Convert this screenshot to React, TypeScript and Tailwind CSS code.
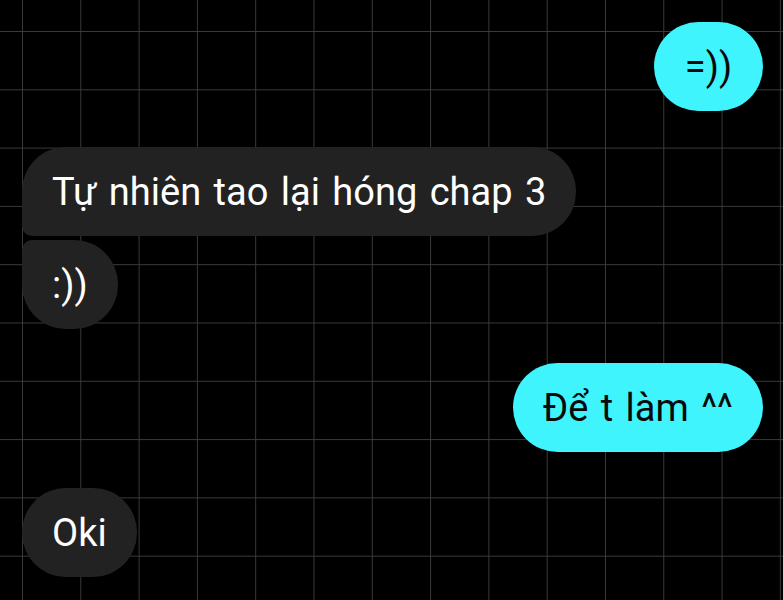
import React from 'react';

type Msg = { id: number; text: string; mine: boolean; corners: string; gap: string; w?: string };

const MESSAGES: Msg[] = [
  { id: 1, text: '=))', mine: true, corners: 'rounded-[45px]', gap: 'mt-0', w: 'w-[109px] justify-center' },
  { id: 2, text: 'Tự nhiên tao lại hóng chap 3', mine: false, corners: 'rounded-[44px] rounded-bl-[10px]', gap: 'mt-[36px]' },
  { id: 3, text: ':))', mine: false, corners: 'rounded-[44px] rounded-tl-[10px]', gap: 'mt-[4px]' },
  { id: 4, text: 'Để t làm ^^', mine: true, corners: 'rounded-[45px]', gap: 'mt-[34px]' },
  { id: 5, text: 'Oki', mine: false, corners: 'rounded-[44px]', gap: 'mt-[36px]' },
];

export default function App() {
  return (
    <div
      className="w-[783px] h-[600px] overflow-hidden bg-black bg-[image:linear-gradient(to_right,#3a3a3a_1px,transparent_1px),linear-gradient(to_bottom,#3a3a3a_1px,transparent_1px)] bg-[length:58.3px_58.3px] bg-[position:22px_31px] font-['Roboto','Noto_Sans',sans-serif]"
    >
      <div className="flex flex-col pt-[22px] pl-[22px] pr-[20px]">
        {MESSAGES.map(m => (
          <div key={m.id} className={`flex ${m.mine ? 'justify-end' : 'justify-start'} ${m.gap}`}>
            <div
              className={`h-[89px] flex items-center text-[38px] leading-none [word-spacing:3px] px-[30px] ${m.corners} ${m.w ?? ''} ${
                m.mine ? 'bg-[#40f4fd] text-[#0a0a0a]' : 'bg-[#222222] text-white'
              }`}
            >
              {m.text}
            </div>
          </div>
        ))}
      </div>
    </div>
  );
}
